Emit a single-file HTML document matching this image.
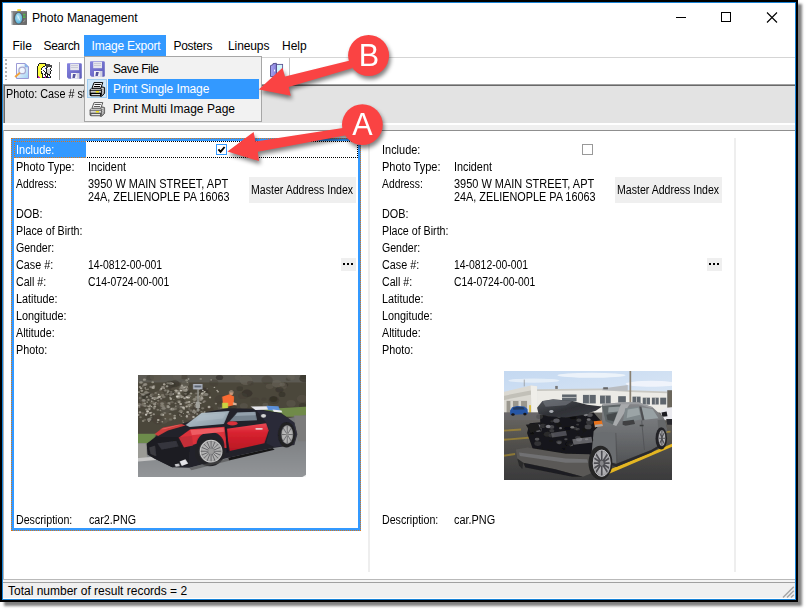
<!DOCTYPE html>
<html>
<head>
<meta charset="utf-8">
<title>Photo Management</title>
<style>
*{box-sizing:border-box;margin:0;padding:0}
html,body{width:806px;height:610px;background:#fff;overflow:hidden}
body{position:relative;font-family:"Liberation Sans",sans-serif;font-size:11px;color:#000}
.a{position:absolute}
svg{position:absolute;overflow:visible}
#win{left:0;top:0;width:798px;height:602px;background:#000;box-shadow:4px 4px 2.5px rgba(0,0,0,.5)}
#winb{left:2px;top:2px;width:794px;height:598px;background:#1883d7}
#client{left:3px;top:3px;width:792px;height:596px;background:#fff}
.t{position:absolute;white-space:nowrap;line-height:13px;height:13px;font-size:12px;transform-origin:0 0}
.ui{font-size:12px}
.mi{position:absolute;top:36px;height:21px;line-height:21px;font-size:12px;white-space:nowrap}
.di{position:absolute;left:113px;height:20px;line-height:20px;font-size:12px;white-space:nowrap}
.btn{position:absolute;background:#efefef;text-align:center;white-space:nowrap;font-size:11px}
.dot{position:absolute;width:2px;height:2px;background:#000}
</style>
</head>
<body>
<div id="win" class="a"></div><div id="winb" class="a"></div><div id="client" class="a"></div>
<svg style="left:10px;top:8px" width="18" height="18" viewBox="0 0 18 18">
<defs><linearGradient id="cb" x1="0" y1="0" x2="1" y2="0"><stop offset="0" stop-color="#dfe6ea"/><stop offset="0.16" stop-color="#7e7e7e"/><stop offset="1" stop-color="#6a6a6a"/></linearGradient>
<radialGradient id="cl" cx="0.45" cy="0.4" r="0.7"><stop offset="0" stop-color="#c4eaf8"/><stop offset="1" stop-color="#3fa6d4"/></radialGradient></defs>
<rect x="7.3" y="1.2" width="3.6" height="2.2" fill="#f2d91a"/>
<rect x="1" y="3" width="16" height="14" rx="0.8" fill="url(#cb)"/>
<path d="M1 3.8H17" stroke="#8d8d8d" stroke-width="0.8"/>
<ellipse cx="8.6" cy="10.2" rx="4.9" ry="6.2" fill="#5a6064"/>
<ellipse cx="8.6" cy="10.2" rx="3.6" ry="5.4" fill="url(#cl)"/>
<path d="M7.4 7.4L10 12.6" stroke="#e6f7fd" stroke-width="0.9" opacity="0.8"/>
<rect x="13" y="5.8" width="2.4" height="1.6" fill="#55b84a"/><rect x="13" y="8.4" width="2.4" height="1.6" fill="#55b84a"/>
<path d="M13 13.6Q15 13.6 15 11.6" stroke="#9a9a9a" stroke-width="0.9" fill="none"/>
</svg>
<div class="t ui" style="left:32px;top:11px;line-height:15px;height:15px;font-size:12.2px;letter-spacing:-0.05px">Photo Management</div>
<svg style="left:676px;top:11px" width="110" height="14" viewBox="0 0 110 14">
<path d="M0 6.5H10" stroke="#000" stroke-width="1" fill="none"/>
<rect x="45.5" y="1.5" width="9" height="9" stroke="#000" stroke-width="1" fill="none"/>
<path d="M91 1.5L101 11.5M101 1.5L91 11.5" stroke="#000" stroke-width="1.1" fill="none"/>
</svg>
<div class="a" style="left:84px;top:35px;width:82px;height:21px;background:#3399ff"></div>
<div class="mi" style="left:12.5px;letter-spacing:0px;color:#000">File</div>
<div class="mi" style="left:43.5px;letter-spacing:-0.3px;color:#000">Search</div>
<div class="mi" style="left:91.5px;letter-spacing:-0.2px;color:#fff">Image Export</div>
<div class="mi" style="left:173.5px;letter-spacing:-0.3px;color:#000">Posters</div>
<div class="mi" style="left:228px;letter-spacing:-0.1px;color:#000">Lineups</div>
<div class="mi" style="left:282px;letter-spacing:0px;color:#000">Help</div>
<div class="a" style="left:3px;top:57px;width:792px;height:1px;background:#d5d5d5"></div>
<div class="a" style="left:5px;top:59px;width:2px;height:21px;background-image:repeating-linear-gradient(#b4b4b4 0 2px,transparent 2px 4px)"></div>
<div class="a" style="left:59px;top:62px;width:1px;height:18px;background:#a0a0a0"></div>
<div class="a" style="left:289px;top:58px;width:1px;height:26px;background:#c4c4c4"></div>
<svg style="left:14px;top:63px" width="16" height="16" viewBox="0 0 16 16">
<defs><linearGradient id="dg1" x1="0" y1="0" x2="1" y2="1"><stop offset="0.15" stop-color="#fdfeff"/><stop offset="1" stop-color="#9fd0f3"/></linearGradient></defs>
<path d="M2.5 0.5H11L14.5 4V15.5H2.5Z" fill="url(#dg1)" stroke="#9b9ad6" stroke-width="1"/>
<path d="M11 0.5V4H14.5Z" fill="#79c2f6" stroke="#9b9ad6" stroke-width="0.6"/>
<circle cx="8.2" cy="7.4" r="3.3" fill="#f4f8ff" fill-opacity="0.85" stroke="#a9a9cf" stroke-width="1.3"/>
<path d="M5.4 10.2L1.6 13.5" stroke="#f3a33d" stroke-width="1.9" stroke-linecap="round"/>
</svg>
<svg style="left:37px;top:63px" width="16" height="16" viewBox="0 0 16 16"><defs><filter id="pb"><feGaussianBlur stdDeviation="0.3"/></filter></defs><g filter="url(#pb)"><rect x="2" y="0" width="7" height="1" fill="#1c1c1c"/><rect x="1" y="1" width="1" height="1" fill="#1c1c1c"/><rect x="2" y="1" width="6" height="1" fill="#ffff3e"/><rect x="8" y="1" width="1" height="1" fill="#1c1c1c"/><rect x="9" y="1" width="4" height="1" fill="#474747"/><rect x="1" y="2" width="1" height="1" fill="#1c1c1c"/><rect x="2" y="2" width="6" height="1" fill="#ffff3e"/><rect x="8" y="2" width="1" height="1" fill="#1c1c1c"/><rect x="9" y="2" width="6" height="1" fill="#474747"/><rect x="0" y="3" width="1" height="1" fill="#1c1c1c"/><rect x="1" y="3" width="5" height="1" fill="#ffff3e"/><rect x="6" y="3" width="2" height="1" fill="#1c1c1c"/><rect x="8" y="3" width="1" height="1" fill="#fbfbfb"/><rect x="9" y="3" width="6" height="1" fill="#474747"/><rect x="0" y="4" width="1" height="1" fill="#1c1c1c"/><rect x="1" y="4" width="4" height="1" fill="#ffff3e"/><rect x="5" y="4" width="1" height="1" fill="#1c1c1c"/><rect x="6" y="4" width="3" height="1" fill="#fbfbfb"/><rect x="9" y="4" width="2" height="1" fill="#474747"/><rect x="11" y="4" width="3" height="1" fill="#fbfbfb"/><rect x="14" y="4" width="1" height="1" fill="#474747"/><rect x="0" y="5" width="1" height="1" fill="#1c1c1c"/><rect x="1" y="5" width="3" height="1" fill="#ffff3e"/><rect x="4" y="5" width="1" height="1" fill="#1c1c1c"/><rect x="5" y="5" width="3" height="1" fill="#fbfbfb"/><rect x="8" y="5" width="1" height="1" fill="#2233e6"/><rect x="9" y="5" width="1" height="1" fill="#1c1c1c"/><rect x="10" y="5" width="3" height="1" fill="#fbfbfb"/><rect x="13" y="5" width="1" height="1" fill="#1c1c1c"/><rect x="0" y="6" width="1" height="1" fill="#1c1c1c"/><rect x="1" y="6" width="3" height="1" fill="#ffff3e"/><rect x="4" y="6" width="1" height="1" fill="#1c1c1c"/><rect x="5" y="6" width="4" height="1" fill="#fbfbfb"/><rect x="9" y="6" width="1" height="1" fill="#1c1c1c"/><rect x="10" y="6" width="3" height="1" fill="#d4d4d4"/><rect x="13" y="6" width="1" height="1" fill="#1c1c1c"/><rect x="0" y="7" width="1" height="1" fill="#1c1c1c"/><rect x="1" y="7" width="3" height="1" fill="#ffff3e"/><rect x="4" y="7" width="2" height="1" fill="#fbfbfb"/><rect x="6" y="7" width="1" height="1" fill="#1c1c1c"/><rect x="7" y="7" width="2" height="1" fill="#fbfbfb"/><rect x="9" y="7" width="1" height="1" fill="#1c1c1c"/><rect x="10" y="7" width="3" height="1" fill="#d4d4d4"/><rect x="13" y="7" width="1" height="1" fill="#fbfbfb"/><rect x="14" y="7" width="1" height="1" fill="#1c1c1c"/><rect x="0" y="8" width="1" height="1" fill="#1c1c1c"/><rect x="1" y="8" width="3" height="1" fill="#ffff3e"/><rect x="4" y="8" width="1" height="1" fill="#1c1c1c"/><rect x="5" y="8" width="2" height="1" fill="#fbfbfb"/><rect x="7" y="8" width="1" height="1" fill="#1c1c1c"/><rect x="8" y="8" width="1" height="1" fill="#fbfbfb"/><rect x="9" y="8" width="1" height="1" fill="#1c1c1c"/><rect x="10" y="8" width="3" height="1" fill="#d4d4d4"/><rect x="13" y="8" width="1" height="1" fill="#1c1c1c"/><rect x="0" y="9" width="1" height="1" fill="#1c1c1c"/><rect x="1" y="9" width="3" height="1" fill="#ffff3e"/><rect x="4" y="9" width="1" height="1" fill="#1c1c1c"/><rect x="5" y="9" width="3" height="1" fill="#fbfbfb"/><rect x="8" y="9" width="2" height="1" fill="#1c1c1c"/><rect x="10" y="9" width="3" height="1" fill="#d4d4d4"/><rect x="13" y="9" width="1" height="1" fill="#1c1c1c"/><rect x="0" y="10" width="1" height="1" fill="#1c1c1c"/><rect x="1" y="10" width="3" height="1" fill="#ffff3e"/><rect x="4" y="10" width="2" height="1" fill="#1c1c1c"/><rect x="6" y="10" width="2" height="1" fill="#fbfbfb"/><rect x="8" y="10" width="1" height="1" fill="#1c1c1c"/><rect x="9" y="10" width="1" height="1" fill="#474747"/><rect x="10" y="10" width="1" height="1" fill="#1c1c1c"/><rect x="11" y="10" width="2" height="1" fill="#d4d4d4"/><rect x="13" y="10" width="1" height="1" fill="#1c1c1c"/><rect x="0" y="11" width="1" height="1" fill="#1c1c1c"/><rect x="1" y="11" width="4" height="1" fill="#ffff3e"/><rect x="5" y="11" width="1" height="1" fill="#1c1c1c"/><rect x="6" y="11" width="1" height="1" fill="#fbfbfb"/><rect x="7" y="11" width="1" height="1" fill="#1c1c1c"/><rect x="8" y="11" width="1" height="1" fill="#474747"/><rect x="9" y="11" width="1" height="1" fill="#fbfbfb"/><rect x="10" y="11" width="3" height="1" fill="#1c1c1c"/><rect x="0" y="12" width="1" height="1" fill="#1c1c1c"/><rect x="1" y="12" width="4" height="1" fill="#ffff3e"/><rect x="5" y="12" width="1" height="1" fill="#1c1c1c"/><rect x="6" y="12" width="2" height="1" fill="#fbfbfb"/><rect x="8" y="12" width="1" height="1" fill="#1c1c1c"/><rect x="9" y="12" width="1" height="1" fill="#fbfbfb"/><rect x="10" y="12" width="1" height="1" fill="#1c1c1c"/><rect x="11" y="12" width="1" height="1" fill="#fbfbfb"/><rect x="12" y="12" width="1" height="1" fill="#1c1c1c"/><rect x="0" y="13" width="1" height="1" fill="#1c1c1c"/><rect x="1" y="13" width="1" height="1" fill="#c21fc2"/><rect x="2" y="13" width="3" height="1" fill="#ffff3e"/><rect x="5" y="13" width="1" height="1" fill="#1c1c1c"/><rect x="6" y="13" width="2" height="1" fill="#fbfbfb"/><rect x="8" y="13" width="1" height="1" fill="#c21fc2"/><rect x="9" y="13" width="2" height="1" fill="#1c1c1c"/><rect x="11" y="13" width="2" height="1" fill="#fbfbfb"/><rect x="13" y="13" width="1" height="1" fill="#1c1c1c"/><rect x="0" y="14" width="1" height="1" fill="#1c1c1c"/><rect x="1" y="14" width="2" height="1" fill="#c21fc2"/><rect x="3" y="14" width="2" height="1" fill="#ffff3e"/><rect x="5" y="14" width="3" height="1" fill="#1c1c1c"/><rect x="8" y="14" width="1" height="1" fill="#c21fc2"/><rect x="9" y="14" width="3" height="1" fill="#1c1c1c"/><rect x="12" y="14" width="1" height="1" fill="#2233e6"/><rect x="13" y="14" width="1" height="1" fill="#1c1c1c"/></g></svg>
<svg style="left:66px;top:63px" width="16" height="16" viewBox="0 0 16 16">
<defs><linearGradient id="fga" x1="0" y1="0" x2="1" y2="1"><stop offset="0" stop-color="#8583e0"/><stop offset="1" stop-color="#5d5cb8"/></linearGradient></defs>
<path d="M1.8 0.3H14.6Q15.8 0.3 15.8 1.5V14.6Q15.8 15.8 14.6 15.8H2.6L1 14.2V1.1Q1 0.3 1.8 0.3Z" fill="url(#fga)"/>
<rect x="4.2" y="0.8" width="8.8" height="6.4" fill="#e6e6ee"/>
<path d="M5 2.5H12M5 4.5H12" stroke="#c9c9d6" stroke-width="1"/>
<rect x="5" y="10" width="8.2" height="5.8" fill="#f3f3f8"/>
<path d="M7 11H9.8L8.8 15H6.4Z" fill="#55549e"/>
<path d="M10.5 10L13.2 10V15.8H11.2Z" fill="#d2d2e2"/>
</svg>
<svg style="left:269px;top:62px" width="16" height="16" viewBox="0 0 16 16">
<defs><linearGradient id="dr1" x1="0" y1="0" x2="1" y2="0"><stop offset="0" stop-color="#a9a4f2"/><stop offset="1" stop-color="#8782da"/></linearGradient></defs>
<rect x="7.4" y="2.4" width="6.2" height="12.4" fill="#d2f5fb" stroke="#5b5693" stroke-width="0.9"/>
<path d="M1.5 3.6L4 2.6V1.6L7.4 1.3V14.6H1.5Z" fill="url(#dr1)" stroke="#4e4987" stroke-width="0.9"/>
<rect x="5" y="7.6" width="1.1" height="1.8" fill="#f4f4ff"/>
</svg>
<div class="a" style="left:3px;top:84px;width:792px;height:39px;background:#e3e3e3;border-top:1px solid #a0a0a0;border-left:1px solid #a0a0a0"></div>
<div class="a" style="left:4px;top:85px;width:791px;height:38px;border-top:1px solid #696969;border-left:1px solid #696969"></div>
<div class="t" style="left:6px;top:88px;transform:scaleX(0.9)">Photo: Case # st</div>
<div class="a" style="left:3px;top:125px;width:792px;height:5px;background:#f0f0f0"></div>
<div class="a" style="left:3px;top:130px;width:792px;height:1px;background:#8f8f8f"></div>
<div class="a" style="left:3px;top:130px;width:1px;height:450px;background:#b4b4b4"></div>
<div class="a" style="left:84px;top:56px;width:178px;height:66px;background:#f2f2f2;border:1px solid #a6a6a6"></div>
<div class="a" style="left:108px;top:79px;width:151px;height:20px;background:#3399ff"></div>
<div class="a" style="left:87px;top:79px;width:20px;height:19px;background:#cfe6f8;border:1px solid #9fcdf0"></div>
<div class="di" style="top:59px;letter-spacing:-0.5px">Save File</div>
<div class="di" style="top:79px;color:#fff;letter-spacing:-0.1px">Print Single Image</div>
<div class="di" style="top:99px;letter-spacing:0.03px">Print Multi Image Page</div>
<svg style="left:89px;top:61px" width="16" height="16" viewBox="0 0 16 16">
<defs><linearGradient id="fgb" x1="0" y1="0" x2="1" y2="1"><stop offset="0" stop-color="#8583e0"/><stop offset="1" stop-color="#5d5cb8"/></linearGradient></defs>
<path d="M1.8 0.3H14.6Q15.8 0.3 15.8 1.5V14.6Q15.8 15.8 14.6 15.8H2.6L1 14.2V1.1Q1 0.3 1.8 0.3Z" fill="url(#fgb)"/>
<rect x="4.2" y="0.8" width="8.8" height="6.4" fill="#e6e6ee"/>
<path d="M5 2.5H12M5 4.5H12" stroke="#c9c9d6" stroke-width="1"/>
<rect x="5" y="10" width="8.2" height="5.8" fill="#f3f3f8"/>
<path d="M7 11H9.8L8.8 15H6.4Z" fill="#55549e"/>
<path d="M10.5 10L13.2 10V15.8H11.2Z" fill="#d2d2e2"/>
</svg>
<svg style="left:89px;top:82px" width="16" height="15" viewBox="0 0 16 15">
<path d="M12 4.5L15.6 5.6V11.2L13 14.2H11Z" fill="#9a9a9a" stroke="#000" stroke-width="0.9"/>
<path d="M12.4 6.2L14.8 7M12.4 8.4L14.8 9.2M12.4 10.6L14.2 11.2" stroke="#e8e8e8" stroke-width="0.8"/>
<path d="M5 0.6H13.8L11.8 6.2H3Z" fill="#fff" stroke="#000" stroke-width="1"/>
<path d="M5.6 2.5H11.8M4.9 4.5H11.1" stroke="#000" stroke-width="1"/>
<rect x="0.6" y="6.6" width="12.2" height="7.6" rx="1.6" fill="#000"/>
<rect x="1.6" y="8.8" width="10.4" height="1.9" fill="#c8c8c8"/>
<rect x="6.8" y="9.1" width="3.2" height="1.4" fill="#f2e300"/>
<rect x="2.4" y="12.1" width="8.6" height="1.1" fill="#f2f2f2"/>
<path d="M1.6 7.6H11.8" stroke="#dcdcdc" stroke-width="0.9"/>
</svg>
<svg style="left:89px;top:102px" width="16" height="15" viewBox="0 0 16 15">
<path d="M12 4.5L15.6 5.6V11.2L13 14.2H11Z" fill="#9a9a9a" stroke="#5c5c5c" stroke-width="0.9"/>
<path d="M12.4 6.2L14.8 7M12.4 8.4L14.8 9.2M12.4 10.6L14.2 11.2" stroke="#e8e8e8" stroke-width="0.8"/>
<path d="M5 0.6H13.8L11.8 6.2H3Z" fill="#fff" stroke="#5c5c5c" stroke-width="1"/>
<path d="M5.6 2.5H11.8M4.9 4.5H11.1" stroke="#5c5c5c" stroke-width="1"/>
<rect x="0.6" y="6.6" width="12.2" height="7.6" rx="1.6" fill="#5c5c5c"/>
<rect x="1.6" y="8.8" width="10.4" height="1.9" fill="#d6d6d6"/>
<rect x="6.8" y="9.1" width="3.2" height="1.4" fill="#f2e300"/>
<rect x="2.4" y="12.1" width="8.6" height="1.1" fill="#f2f2f2"/>
<path d="M1.6 7.6H11.8" stroke="#dcdcdc" stroke-width="0.9"/>
</svg>
<div class="a" style="left:368px;top:138px;width:2px;height:434px;background:#eeeeee"></div>
<div class="a" style="left:734px;top:138px;width:2px;height:434px;background:#eeeeee"></div>
<div class="a" style="left:11px;top:138px;width:350px;height:393px;border:3px solid #3399ff"></div>
<div class="a" style="left:11px;top:138px;width:350px;height:393px;border:1px dotted #d8781c"></div>
<div class="a" style="left:14px;top:141px;width:72px;height:17px;background:#3399ff"></div>
<div class="a" style="left:14px;top:141px;width:344px;height:17px;border:1px dotted #000"></div>
<div class="a" style="left:14px;top:141px;width:72px;height:17px;border:1px dotted #d8781c;border-right:none"></div>
<div class="t" style="left:15.79px;top:144px;transform:scaleX(0.9125);color:#fff">Include:</div>
<div class="t" style="left:15.78px;top:161px;transform:scaleX(0.9166)">Photo Type:</div><div class="t" style="left:88.00px;top:161px;transform:scaleX(0.9024)">Incident</div>
<div class="t" style="left:16.30px;top:178px;transform:scaleX(0.8627)">Address:</div><div class="t" style="left:88.34px;top:178px;transform:scaleX(0.9139)">3950 W MAIN STREET, APT</div>
<div class="t" style="left:88.35px;top:191px;transform:scaleX(0.9042)">24A, ZELIENOPLE PA 16063</div>
<div class="t" style="left:15.80px;top:208px;transform:scaleX(0.9028)">DOB:</div>
<div class="t" style="left:15.81px;top:225px;transform:scaleX(0.8907)">Place of Birth:</div>
<div class="t" style="left:16.26px;top:242px;transform:scaleX(0.8814)">Gender:</div>
<div class="t" style="left:16.25px;top:259px;transform:scaleX(0.8981)">Case #:</div><div class="t" style="left:88.43px;top:259px;transform:scaleX(0.8669)">14-0812-00-001</div>
<div class="t" style="left:16.26px;top:276px;transform:scaleX(0.8862)">Call #:</div><div class="t" style="left:88.17px;top:276px;transform:scaleX(0.8645)">C14-0724-00-001</div>
<div class="t" style="left:15.80px;top:293px;transform:scaleX(0.9023)">Latitude:</div>
<div class="t" style="left:15.80px;top:310px;transform:scaleX(0.9019)">Longitude:</div>
<div class="t" style="left:15.80px;top:327px;transform:scaleX(0.8923)">Altitude:</div>
<div class="t" style="left:15.80px;top:344px;transform:scaleX(0.9008)">Photo:</div>
<div class="t" style="left:15.81px;top:514px;transform:scaleX(0.8882)">Description:</div><div class="t" style="left:88.55px;top:514px;transform:scaleX(0.8917)">car2.PNG</div>
<div class="t" style="left:381.79px;top:144px;transform:scaleX(0.9125)">Include:</div>
<div class="t" style="left:381.78px;top:161px;transform:scaleX(0.9166)">Photo Type:</div><div class="t" style="left:454.00px;top:161px;transform:scaleX(0.9024)">Incident</div>
<div class="t" style="left:382.30px;top:178px;transform:scaleX(0.8627)">Address:</div><div class="t" style="left:454.34px;top:178px;transform:scaleX(0.9139)">3950 W MAIN STREET, APT</div>
<div class="t" style="left:454.35px;top:191px;transform:scaleX(0.9042)">24A, ZELIENOPLE PA 16063</div>
<div class="t" style="left:381.80px;top:208px;transform:scaleX(0.9028)">DOB:</div>
<div class="t" style="left:381.81px;top:225px;transform:scaleX(0.8907)">Place of Birth:</div>
<div class="t" style="left:382.26px;top:242px;transform:scaleX(0.8814)">Gender:</div>
<div class="t" style="left:382.25px;top:259px;transform:scaleX(0.8981)">Case #:</div><div class="t" style="left:454.43px;top:259px;transform:scaleX(0.8669)">14-0812-00-001</div>
<div class="t" style="left:382.26px;top:276px;transform:scaleX(0.8862)">Call #:</div><div class="t" style="left:454.17px;top:276px;transform:scaleX(0.8645)">C14-0724-00-001</div>
<div class="t" style="left:381.80px;top:293px;transform:scaleX(0.9023)">Latitude:</div>
<div class="t" style="left:381.80px;top:310px;transform:scaleX(0.9019)">Longitude:</div>
<div class="t" style="left:381.80px;top:327px;transform:scaleX(0.8923)">Altitude:</div>
<div class="t" style="left:381.80px;top:344px;transform:scaleX(0.9008)">Photo:</div>
<div class="t" style="left:381.81px;top:514px;transform:scaleX(0.8882)">Description:</div><div class="t" style="left:454.05px;top:514px;transform:scaleX(0.9091)">car.PNG</div>
<div class="a" style="left:249px;top:177px;width:107px;height:26px;background:#efefef"></div><div class="t" style="left:251.12px;top:184px;transform:scaleX(0.8802)">Master Address Index</div>
<div class="a" style="left:615px;top:177px;width:107px;height:26px;background:#efefef"></div><div class="t" style="left:617.12px;top:184px;transform:scaleX(0.8802)">Master Address Index</div>
<div class="a" style="left:341px;top:258px;width:15px;height:13px;background:#efefef"></div><div class="dot" style="left:343px;top:263px"></div><div class="dot" style="left:347px;top:263px"></div><div class="dot" style="left:351px;top:263px"></div>
<div class="a" style="left:707px;top:258px;width:15px;height:13px;background:#efefef"></div><div class="dot" style="left:709px;top:263px"></div><div class="dot" style="left:713px;top:263px"></div><div class="dot" style="left:717px;top:263px"></div>
<div class="a" style="left:216px;top:144px;width:11px;height:11px;background:#fff;border:1px solid #3399ff"></div>
<svg style="left:216px;top:144px" width="11" height="11" viewBox="0 0 11 11"><path d="M2.4 5.3L4.6 7.7L8.6 3" stroke="#000" stroke-width="1.9" fill="none"/></svg>
<div class="a" style="left:582px;top:144px;width:11px;height:11px;background:#fff;border:1px solid #999"></div>
<svg style="left:138px;top:375px" width="168" height="102" viewBox="0 0 168 102">
<defs>
<clipPath id="p1c"><rect x="0" y="0" width="168" height="102"/></clipPath>
<filter id="p1b" x="-5%" y="-5%" width="110%" height="110%"><feGaussianBlur stdDeviation="0.55"/></filter>
<linearGradient id="p1road" x1="0" y1="0" x2="0" y2="1"><stop offset="0" stop-color="#717376"/><stop offset="1" stop-color="#94979a"/></linearGradient>
<linearGradient id="p1ws" x1="0" y1="0" x2="1" y2="1"><stop offset="0" stop-color="#bccad2"/><stop offset="1" stop-color="#8696a2"/></linearGradient>
<linearGradient id="p1door" x1="0" y1="0" x2="0" y2="1"><stop offset="0" stop-color="#ea4a55"/><stop offset="0.35" stop-color="#d8222f"/><stop offset="1" stop-color="#b81824"/></linearGradient>
<radialGradient id="p1rim" cx="0.5" cy="0.5" r="0.5"><stop offset="0" stop-color="#8c8c8c"/><stop offset="0.25" stop-color="#c4c4c4"/><stop offset="0.85" stop-color="#aeaeae"/><stop offset="1" stop-color="#7a7a7a"/></radialGradient>
</defs>
<g clip-path="url(#p1c)">
<g filter="url(#p1b)">
<g transform="scale(0.2134) translate(-10 -10)">
<rect x="0" y="0" width="810" height="500" fill="#4b463b"/>
<rect x="0" y="0" width="810" height="45" fill="#5c5a52"/>
<g><ellipse cx="191" cy="83" rx="29" ry="21" fill="#5e594c" opacity="0.45"/><ellipse cx="516" cy="35" rx="30" ry="22" fill="#68645a" opacity="0.67"/><ellipse cx="68" cy="219" rx="11" ry="8" fill="#2f2c25" opacity="0.45"/><ellipse cx="208" cy="196" rx="13" ry="9" fill="#443f35" opacity="0.70"/><ellipse cx="160" cy="55" rx="26" ry="18" fill="#38342b" opacity="0.42"/><ellipse cx="37" cy="119" rx="26" ry="19" fill="#68645a" opacity="0.35"/><ellipse cx="714" cy="29" rx="12" ry="9" fill="#443f35" opacity="0.46"/><ellipse cx="392" cy="22" rx="17" ry="12" fill="#2f2c25" opacity="0.61"/><ellipse cx="430" cy="149" rx="26" ry="19" fill="#38342b" opacity="0.56"/><ellipse cx="196" cy="114" rx="26" ry="19" fill="#5e594c" opacity="0.44"/><ellipse cx="487" cy="74" rx="15" ry="11" fill="#38342b" opacity="0.55"/><ellipse cx="700" cy="56" rx="14" ry="10" fill="#38342b" opacity="0.56"/><ellipse cx="647" cy="128" rx="25" ry="18" fill="#38342b" opacity="0.38"/><ellipse cx="727" cy="143" rx="22" ry="16" fill="#5e594c" opacity="0.57"/><ellipse cx="53" cy="111" rx="25" ry="18" fill="#2f2c25" opacity="0.61"/><ellipse cx="404" cy="161" rx="21" ry="15" fill="#68645a" opacity="0.44"/><ellipse cx="136" cy="170" rx="27" ry="20" fill="#68645a" opacity="0.37"/><ellipse cx="334" cy="97" rx="15" ry="11" fill="#38342b" opacity="0.39"/><ellipse cx="607" cy="150" rx="14" ry="10" fill="#68645a" opacity="0.53"/><ellipse cx="789" cy="16" rx="19" ry="14" fill="#2f2c25" opacity="0.40"/><ellipse cx="320" cy="82" rx="20" ry="14" fill="#38342b" opacity="0.69"/><ellipse cx="781" cy="153" rx="17" ry="12" fill="#38342b" opacity="0.54"/><ellipse cx="201" cy="119" rx="29" ry="21" fill="#443f35" opacity="0.46"/><ellipse cx="182" cy="51" rx="23" ry="16" fill="#38342b" opacity="0.61"/><ellipse cx="150" cy="208" rx="30" ry="21" fill="#5e594c" opacity="0.48"/><ellipse cx="627" cy="63" rx="18" ry="13" fill="#5e594c" opacity="0.63"/><ellipse cx="645" cy="123" rx="19" ry="14" fill="#2f2c25" opacity="0.51"/><ellipse cx="254" cy="116" rx="31" ry="22" fill="#5e594c" opacity="0.65"/><ellipse cx="172" cy="101" rx="13" ry="9" fill="#443f35" opacity="0.48"/><ellipse cx="227" cy="19" rx="15" ry="11" fill="#443f35" opacity="0.53"/><ellipse cx="458" cy="161" rx="15" ry="11" fill="#38342b" opacity="0.48"/><ellipse cx="131" cy="226" rx="18" ry="13" fill="#5e594c" opacity="0.60"/><ellipse cx="727" cy="20" rx="18" ry="13" fill="#68645a" opacity="0.51"/><ellipse cx="685" cy="101" rx="16" ry="12" fill="#2f2c25" opacity="0.58"/><ellipse cx="249" cy="152" rx="21" ry="15" fill="#5e594c" opacity="0.40"/><ellipse cx="480" cy="22" rx="17" ry="12" fill="#68645a" opacity="0.52"/><ellipse cx="558" cy="131" rx="22" ry="16" fill="#443f35" opacity="0.60"/><ellipse cx="536" cy="48" rx="15" ry="11" fill="#443f35" opacity="0.54"/><ellipse cx="365" cy="46" rx="21" ry="15" fill="#443f35" opacity="0.43"/><ellipse cx="241" cy="93" rx="15" ry="11" fill="#38342b" opacity="0.65"/><ellipse cx="600" cy="124" rx="11" ry="8" fill="#443f35" opacity="0.58"/><ellipse cx="63" cy="207" rx="22" ry="16" fill="#443f35" opacity="0.58"/><ellipse cx="195" cy="157" rx="13" ry="9" fill="#68645a" opacity="0.39"/><ellipse cx="399" cy="125" rx="29" ry="21" fill="#443f35" opacity="0.52"/><ellipse cx="231" cy="51" rx="19" ry="14" fill="#68645a" opacity="0.62"/><ellipse cx="287" cy="175" rx="21" ry="15" fill="#443f35" opacity="0.67"/><ellipse cx="645" cy="123" rx="16" ry="12" fill="#2f2c25" opacity="0.46"/><ellipse cx="105" cy="220" rx="29" ry="21" fill="#443f35" opacity="0.37"/><ellipse cx="401" cy="147" rx="20" ry="15" fill="#443f35" opacity="0.66"/><ellipse cx="67" cy="23" rx="18" ry="13" fill="#443f35" opacity="0.55"/><ellipse cx="217" cy="165" rx="15" ry="11" fill="#68645a" opacity="0.48"/><ellipse cx="280" cy="217" rx="12" ry="8" fill="#5e594c" opacity="0.62"/><ellipse cx="506" cy="155" rx="19" ry="14" fill="#68645a" opacity="0.37"/><ellipse cx="64" cy="119" rx="20" ry="14" fill="#68645a" opacity="0.36"/><ellipse cx="117" cy="129" rx="17" ry="12" fill="#443f35" opacity="0.52"/><ellipse cx="27" cy="151" rx="16" ry="12" fill="#443f35" opacity="0.59"/><ellipse cx="195" cy="15" rx="22" ry="16" fill="#68645a" opacity="0.35"/><ellipse cx="615" cy="33" rx="27" ry="20" fill="#443f35" opacity="0.44"/><ellipse cx="92" cy="19" rx="27" ry="19" fill="#5e594c" opacity="0.59"/><ellipse cx="661" cy="51" rx="23" ry="17" fill="#68645a" opacity="0.63"/><ellipse cx="242" cy="108" rx="18" ry="13" fill="#2f2c25" opacity="0.52"/><ellipse cx="521" cy="96" rx="25" ry="18" fill="#2f2c25" opacity="0.61"/><ellipse cx="255" cy="206" rx="21" ry="15" fill="#68645a" opacity="0.36"/><ellipse cx="501" cy="108" rx="21" ry="15" fill="#443f35" opacity="0.44"/><ellipse cx="320" cy="176" rx="16" ry="12" fill="#443f35" opacity="0.41"/><ellipse cx="686" cy="61" rx="22" ry="16" fill="#5e594c" opacity="0.55"/><ellipse cx="342" cy="174" rx="23" ry="17" fill="#443f35" opacity="0.63"/><ellipse cx="109" cy="100" rx="24" ry="17" fill="#5e594c" opacity="0.58"/><ellipse cx="779" cy="121" rx="25" ry="18" fill="#5e594c" opacity="0.44"/><ellipse cx="224" cy="72" rx="24" ry="17" fill="#68645a" opacity="0.68"/><ellipse cx="791" cy="26" rx="25" ry="18" fill="#38342b" opacity="0.65"/><ellipse cx="163" cy="95" rx="22" ry="16" fill="#38342b" opacity="0.49"/><ellipse cx="686" cy="54" rx="13" ry="9" fill="#68645a" opacity="0.63"/><ellipse cx="673" cy="79" rx="19" ry="13" fill="#2f2c25" opacity="0.49"/><ellipse cx="122" cy="145" rx="24" ry="17" fill="#5e594c" opacity="0.54"/></g>
<g><ellipse cx="186" cy="143" rx="4.9" ry="3.7" fill="#8f8b7e" opacity="0.88"/><ellipse cx="84" cy="194" rx="5.5" ry="4.2" fill="#cfcbc0" opacity="0.54"/><ellipse cx="33" cy="65" rx="3.0" ry="2.3" fill="#dedad0" opacity="0.65"/><ellipse cx="240" cy="66" rx="4.1" ry="3.2" fill="#b9b5a8" opacity="0.80"/><ellipse cx="188" cy="83" rx="7.1" ry="5.5" fill="#b9b5a8" opacity="0.82"/><ellipse cx="133" cy="73" rx="3.2" ry="2.4" fill="#b9b5a8" opacity="0.68"/><ellipse cx="314" cy="82" rx="4.3" ry="3.3" fill="#dedad0" opacity="0.84"/><ellipse cx="56" cy="77" rx="3.1" ry="2.4" fill="#dedad0" opacity="0.58"/><ellipse cx="228" cy="119" rx="6.0" ry="4.6" fill="#cfcbc0" opacity="0.69"/><ellipse cx="160" cy="108" rx="2.9" ry="2.2" fill="#8f8b7e" opacity="0.64"/><ellipse cx="343" cy="160" rx="7.1" ry="5.5" fill="#cfcbc0" opacity="0.70"/><ellipse cx="14" cy="153" rx="4.5" ry="3.5" fill="#b9b5a8" opacity="0.54"/><ellipse cx="237" cy="76" rx="4.5" ry="3.4" fill="#dedad0" opacity="0.56"/><ellipse cx="239" cy="200" rx="4.5" ry="3.5" fill="#c4c0b4" opacity="0.57"/><ellipse cx="364" cy="197" rx="3.7" ry="2.8" fill="#c4c0b4" opacity="0.78"/><ellipse cx="226" cy="169" rx="4.9" ry="3.8" fill="#b9b5a8" opacity="0.69"/><ellipse cx="103" cy="173" rx="6.4" ry="4.9" fill="#8f8b7e" opacity="0.72"/><ellipse cx="59" cy="126" rx="5.5" ry="4.2" fill="#b9b5a8" opacity="0.63"/><ellipse cx="368" cy="68" rx="4.0" ry="3.1" fill="#dedad0" opacity="0.61"/><ellipse cx="28" cy="84" rx="7.0" ry="5.4" fill="#b9b5a8" opacity="0.66"/><ellipse cx="280" cy="148" rx="3.0" ry="2.3" fill="#b9b5a8" opacity="0.71"/><ellipse cx="149" cy="90" rx="5.4" ry="4.2" fill="#b9b5a8" opacity="0.72"/><ellipse cx="295" cy="92" rx="3.2" ry="2.4" fill="#8f8b7e" opacity="0.67"/><ellipse cx="61" cy="227" rx="3.2" ry="2.5" fill="#dedad0" opacity="0.91"/><ellipse cx="159" cy="147" rx="3.2" ry="2.5" fill="#c4c0b4" opacity="0.55"/><ellipse cx="110" cy="112" rx="6.9" ry="5.3" fill="#c4c0b4" opacity="0.76"/><ellipse cx="182" cy="201" rx="6.1" ry="4.7" fill="#b9b5a8" opacity="0.64"/><ellipse cx="54" cy="189" rx="4.9" ry="3.8" fill="#b9b5a8" opacity="0.67"/><ellipse cx="66" cy="153" rx="6.1" ry="4.7" fill="#a39f92" opacity="0.80"/><ellipse cx="182" cy="212" rx="5.7" ry="4.4" fill="#cfcbc0" opacity="0.79"/><ellipse cx="323" cy="183" rx="3.8" ry="2.9" fill="#cfcbc0" opacity="0.76"/><ellipse cx="133" cy="54" rx="6.5" ry="5.0" fill="#b9b5a8" opacity="0.82"/><ellipse cx="381" cy="83" rx="4.8" ry="3.7" fill="#a39f92" opacity="0.92"/><ellipse cx="272" cy="175" rx="5.5" ry="4.3" fill="#a39f92" opacity="0.53"/><ellipse cx="22" cy="208" rx="5.9" ry="4.5" fill="#8f8b7e" opacity="0.66"/><ellipse cx="263" cy="143" rx="4.6" ry="3.5" fill="#cfcbc0" opacity="0.51"/><ellipse cx="334" cy="75" rx="3.1" ry="2.4" fill="#c4c0b4" opacity="0.55"/><ellipse cx="53" cy="137" rx="4.4" ry="3.4" fill="#b9b5a8" opacity="0.81"/><ellipse cx="88" cy="125" rx="2.9" ry="2.2" fill="#dedad0" opacity="0.74"/><ellipse cx="24" cy="73" rx="5.2" ry="4.0" fill="#8f8b7e" opacity="0.73"/><ellipse cx="283" cy="72" rx="6.7" ry="5.1" fill="#dedad0" opacity="0.56"/><ellipse cx="187" cy="156" rx="4.5" ry="3.4" fill="#8f8b7e" opacity="0.79"/><ellipse cx="206" cy="197" rx="4.3" ry="3.3" fill="#cfcbc0" opacity="0.54"/><ellipse cx="58" cy="76" rx="3.2" ry="2.5" fill="#a39f92" opacity="0.74"/><ellipse cx="318" cy="92" rx="6.5" ry="5.0" fill="#a39f92" opacity="0.73"/><ellipse cx="24" cy="97" rx="4.0" ry="3.1" fill="#b9b5a8" opacity="0.60"/><ellipse cx="348" cy="115" rx="5.1" ry="4.0" fill="#c4c0b4" opacity="0.85"/><ellipse cx="44" cy="71" rx="4.1" ry="3.2" fill="#c4c0b4" opacity="0.75"/><ellipse cx="74" cy="133" rx="4.0" ry="3.0" fill="#c4c0b4" opacity="0.67"/><ellipse cx="233" cy="67" rx="5.0" ry="3.9" fill="#8f8b7e" opacity="0.67"/><ellipse cx="222" cy="233" rx="3.3" ry="2.5" fill="#cfcbc0" opacity="0.53"/><ellipse cx="220" cy="112" rx="6.8" ry="5.2" fill="#a39f92" opacity="0.61"/><ellipse cx="202" cy="96" rx="6.9" ry="5.3" fill="#dedad0" opacity="0.74"/><ellipse cx="52" cy="113" rx="4.0" ry="3.1" fill="#c4c0b4" opacity="0.85"/><ellipse cx="19" cy="66" rx="5.8" ry="4.5" fill="#a39f92" opacity="0.83"/><ellipse cx="105" cy="130" rx="5.4" ry="4.1" fill="#8f8b7e" opacity="0.78"/><ellipse cx="290" cy="172" rx="3.0" ry="2.3" fill="#c4c0b4" opacity="0.69"/><ellipse cx="216" cy="59" rx="5.6" ry="4.3" fill="#c4c0b4" opacity="0.60"/><ellipse cx="94" cy="139" rx="3.4" ry="2.7" fill="#c4c0b4" opacity="0.78"/><ellipse cx="146" cy="63" rx="6.7" ry="5.1" fill="#cfcbc0" opacity="0.60"/><ellipse cx="399" cy="211" rx="3.9" ry="3.0" fill="#c4c0b4" opacity="0.54"/><ellipse cx="161" cy="116" rx="5.2" ry="4.0" fill="#c4c0b4" opacity="0.56"/><ellipse cx="167" cy="169" rx="3.7" ry="2.9" fill="#c4c0b4" opacity="0.66"/><ellipse cx="258" cy="97" rx="6.4" ry="4.9" fill="#b9b5a8" opacity="0.72"/><ellipse cx="19" cy="185" rx="6.7" ry="5.2" fill="#dedad0" opacity="0.57"/><ellipse cx="82" cy="68" rx="7.1" ry="5.5" fill="#c4c0b4" opacity="0.54"/><ellipse cx="34" cy="225" rx="6.1" ry="4.7" fill="#a39f92" opacity="0.68"/><ellipse cx="176" cy="99" rx="4.5" ry="3.4" fill="#c4c0b4" opacity="0.82"/><ellipse cx="298" cy="110" rx="3.6" ry="2.7" fill="#8f8b7e" opacity="0.86"/><ellipse cx="232" cy="65" rx="4.3" ry="3.3" fill="#a39f92" opacity="0.63"/><ellipse cx="55" cy="181" rx="6.9" ry="5.3" fill="#cfcbc0" opacity="0.90"/><ellipse cx="308" cy="110" rx="3.2" ry="2.4" fill="#a39f92" opacity="0.64"/><ellipse cx="385" cy="88" rx="4.6" ry="3.5" fill="#cfcbc0" opacity="0.74"/><ellipse cx="283" cy="185" rx="3.0" ry="2.3" fill="#8f8b7e" opacity="0.55"/><ellipse cx="102" cy="118" rx="6.1" ry="4.7" fill="#c4c0b4" opacity="0.67"/><ellipse cx="48" cy="78" rx="5.2" ry="4.0" fill="#8f8b7e" opacity="0.69"/><ellipse cx="213" cy="203" rx="4.8" ry="3.7" fill="#c4c0b4" opacity="0.53"/><ellipse cx="243" cy="184" rx="6.9" ry="5.3" fill="#cfcbc0" opacity="0.67"/><ellipse cx="243" cy="115" rx="4.1" ry="3.1" fill="#dedad0" opacity="0.77"/><ellipse cx="153" cy="85" rx="5.3" ry="4.1" fill="#a39f92" opacity="0.80"/><ellipse cx="238" cy="158" rx="5.8" ry="4.5" fill="#b9b5a8" opacity="0.90"/><ellipse cx="178" cy="125" rx="3.9" ry="3.0" fill="#8f8b7e" opacity="0.54"/><ellipse cx="326" cy="216" rx="7.0" ry="5.4" fill="#cfcbc0" opacity="0.77"/><ellipse cx="55" cy="156" rx="3.7" ry="2.9" fill="#b9b5a8" opacity="0.66"/><ellipse cx="70" cy="101" rx="4.6" ry="3.6" fill="#8f8b7e" opacity="0.62"/><ellipse cx="237" cy="113" rx="5.1" ry="4.0" fill="#cfcbc0" opacity="0.93"/><ellipse cx="296" cy="75" rx="6.7" ry="5.1" fill="#8f8b7e" opacity="0.78"/><ellipse cx="150" cy="82" rx="5.3" ry="4.1" fill="#8f8b7e" opacity="0.59"/><ellipse cx="119" cy="75" rx="5.0" ry="3.9" fill="#c4c0b4" opacity="0.91"/><ellipse cx="353" cy="33" rx="4.0" ry="3.1" fill="#dedad0" opacity="0.51"/><ellipse cx="25" cy="72" rx="6.1" ry="4.7" fill="#c4c0b4" opacity="0.57"/><ellipse cx="102" cy="231" rx="4.4" ry="3.4" fill="#a39f92" opacity="0.65"/><ellipse cx="300" cy="201" rx="3.4" ry="2.6" fill="#8f8b7e" opacity="0.88"/><ellipse cx="310" cy="118" rx="4.5" ry="3.5" fill="#cfcbc0" opacity="0.67"/><ellipse cx="265" cy="233" rx="5.2" ry="4.0" fill="#c4c0b4" opacity="0.87"/><ellipse cx="82" cy="162" rx="4.8" ry="3.7" fill="#a39f92" opacity="0.54"/><ellipse cx="42" cy="143" rx="5.8" ry="4.5" fill="#a39f92" opacity="0.87"/><ellipse cx="14" cy="90" rx="5.4" ry="4.2" fill="#c4c0b4" opacity="0.64"/><ellipse cx="293" cy="171" rx="3.5" ry="2.7" fill="#a39f92" opacity="0.80"/><ellipse cx="138" cy="215" rx="4.8" ry="3.7" fill="#8f8b7e" opacity="0.91"/><ellipse cx="323" cy="89" rx="4.6" ry="3.5" fill="#c4c0b4" opacity="0.90"/><ellipse cx="107" cy="101" rx="4.4" ry="3.4" fill="#dedad0" opacity="0.76"/><ellipse cx="79" cy="44" rx="6.5" ry="5.0" fill="#b9b5a8" opacity="0.60"/><ellipse cx="33" cy="58" rx="3.0" ry="2.3" fill="#dedad0" opacity="0.53"/><ellipse cx="223" cy="190" rx="3.2" ry="2.5" fill="#c4c0b4" opacity="0.55"/><ellipse cx="48" cy="196" rx="5.9" ry="4.6" fill="#dedad0" opacity="0.84"/><ellipse cx="213" cy="186" rx="4.3" ry="3.3" fill="#a39f92" opacity="0.80"/><ellipse cx="203" cy="138" rx="5.9" ry="4.5" fill="#b9b5a8" opacity="0.68"/><ellipse cx="287" cy="193" rx="4.7" ry="3.6" fill="#cfcbc0" opacity="0.61"/><ellipse cx="73" cy="158" rx="4.2" ry="3.3" fill="#dedad0" opacity="0.69"/><ellipse cx="124" cy="229" rx="4.2" ry="3.2" fill="#b9b5a8" opacity="0.64"/><ellipse cx="304" cy="29" rx="6.3" ry="4.8" fill="#a39f92" opacity="0.55"/><ellipse cx="82" cy="71" rx="5.9" ry="4.6" fill="#8f8b7e" opacity="0.73"/><ellipse cx="182" cy="213" rx="6.8" ry="5.2" fill="#a39f92" opacity="0.78"/><ellipse cx="199" cy="110" rx="5.7" ry="4.4" fill="#b9b5a8" opacity="0.72"/><ellipse cx="211" cy="83" rx="5.7" ry="4.4" fill="#cfcbc0" opacity="0.90"/><ellipse cx="106" cy="114" rx="4.6" ry="3.6" fill="#a39f92" opacity="0.57"/><ellipse cx="364" cy="195" rx="6.0" ry="4.6" fill="#8f8b7e" opacity="0.62"/><ellipse cx="11" cy="197" rx="6.4" ry="4.9" fill="#b9b5a8" opacity="0.66"/><ellipse cx="250" cy="136" rx="5.8" ry="4.5" fill="#b9b5a8" opacity="0.93"/><ellipse cx="239" cy="205" rx="6.2" ry="4.8" fill="#dedad0" opacity="0.59"/><ellipse cx="276" cy="189" rx="3.0" ry="2.3" fill="#dedad0" opacity="0.74"/><ellipse cx="71" cy="200" rx="4.2" ry="3.2" fill="#b9b5a8" opacity="0.75"/><ellipse cx="399" cy="165" rx="3.2" ry="2.4" fill="#cfcbc0" opacity="0.55"/><ellipse cx="164" cy="122" rx="6.4" ry="4.9" fill="#c4c0b4" opacity="0.70"/><ellipse cx="304" cy="142" rx="3.7" ry="2.8" fill="#dedad0" opacity="0.83"/><ellipse cx="292" cy="95" rx="3.3" ry="2.5" fill="#cfcbc0" opacity="0.78"/><ellipse cx="61" cy="157" rx="3.7" ry="2.8" fill="#b9b5a8" opacity="0.88"/><ellipse cx="241" cy="44" rx="3.5" ry="2.7" fill="#b9b5a8" opacity="0.70"/><ellipse cx="311" cy="97" rx="6.8" ry="5.3" fill="#cfcbc0" opacity="0.79"/><ellipse cx="309" cy="197" rx="4.3" ry="3.3" fill="#dedad0" opacity="0.78"/><ellipse cx="294" cy="154" rx="6.2" ry="4.8" fill="#cfcbc0" opacity="0.80"/><ellipse cx="247" cy="29" rx="4.3" ry="3.3" fill="#c4c0b4" opacity="0.70"/><ellipse cx="227" cy="68" rx="4.1" ry="3.2" fill="#b9b5a8" opacity="0.78"/><ellipse cx="72" cy="186" rx="5.2" ry="4.0" fill="#a39f92" opacity="0.78"/><ellipse cx="210" cy="146" rx="6.9" ry="5.3" fill="#c4c0b4" opacity="0.82"/><ellipse cx="375" cy="144" rx="5.7" ry="4.4" fill="#b9b5a8" opacity="0.56"/><ellipse cx="196" cy="113" rx="3.3" ry="2.5" fill="#a39f92" opacity="0.62"/><ellipse cx="103" cy="145" rx="3.1" ry="2.4" fill="#a39f92" opacity="0.58"/><ellipse cx="301" cy="213" rx="3.5" ry="2.7" fill="#b9b5a8" opacity="0.63"/><ellipse cx="40" cy="32" rx="7.1" ry="5.5" fill="#c4c0b4" opacity="0.56"/><ellipse cx="250" cy="159" rx="3.5" ry="2.7" fill="#dedad0" opacity="0.71"/><ellipse cx="66" cy="106" rx="3.6" ry="2.8" fill="#8f8b7e" opacity="0.56"/><ellipse cx="105" cy="221" rx="6.2" ry="4.8" fill="#c4c0b4" opacity="0.80"/><ellipse cx="193" cy="111" rx="5.8" ry="4.5" fill="#dedad0" opacity="0.84"/><ellipse cx="215" cy="116" rx="4.2" ry="3.3" fill="#b9b5a8" opacity="0.63"/><ellipse cx="250" cy="116" rx="4.2" ry="3.3" fill="#a39f92" opacity="0.90"/><ellipse cx="223" cy="163" rx="6.6" ry="5.1" fill="#c4c0b4" opacity="0.93"/><ellipse cx="270" cy="207" rx="6.3" ry="4.9" fill="#cfcbc0" opacity="0.79"/><ellipse cx="174" cy="51" rx="5.1" ry="3.9" fill="#cfcbc0" opacity="0.56"/><ellipse cx="220" cy="225" rx="3.9" ry="3.0" fill="#a39f92" opacity="0.51"/><ellipse cx="77" cy="118" rx="5.1" ry="4.0" fill="#cfcbc0" opacity="0.66"/><ellipse cx="238" cy="35" rx="6.7" ry="5.2" fill="#a39f92" opacity="0.65"/><ellipse cx="66" cy="188" rx="6.6" ry="5.1" fill="#cfcbc0" opacity="0.63"/><ellipse cx="89" cy="158" rx="6.6" ry="5.1" fill="#b9b5a8" opacity="0.79"/><ellipse cx="129" cy="197" rx="4.0" ry="3.1" fill="#dedad0" opacity="0.82"/><ellipse cx="63" cy="171" rx="4.8" ry="3.7" fill="#b9b5a8" opacity="0.58"/><ellipse cx="115" cy="176" rx="4.1" ry="3.2" fill="#a39f92" opacity="0.67"/></g>
<!-- extra blossoms --><g opacity="0.55"><ellipse cx="63" cy="168" rx="7.6" ry="5.4" fill="#d6d2c8" opacity="0.90"/><ellipse cx="162" cy="218" rx="7.9" ry="5.6" fill="#bdb9ad" opacity="0.55"/><ellipse cx="308" cy="119" rx="9.1" ry="6.5" fill="#d6d2c8" opacity="0.79"/><ellipse cx="183" cy="168" rx="10.2" ry="7.3" fill="#bdb9ad" opacity="0.60"/><ellipse cx="155" cy="142" rx="7.6" ry="5.4" fill="#d6d2c8" opacity="0.78"/><ellipse cx="160" cy="192" rx="6.0" ry="4.3" fill="#c9c5ba" opacity="0.90"/><ellipse cx="33" cy="144" rx="7.1" ry="5.1" fill="#a9a598" opacity="0.87"/><ellipse cx="294" cy="116" rx="7.4" ry="5.3" fill="#e4e0d6" opacity="0.66"/><ellipse cx="165" cy="89" rx="5.8" ry="4.1" fill="#e4e0d6" opacity="0.55"/><ellipse cx="32" cy="151" rx="8.1" ry="5.8" fill="#a9a598" opacity="0.74"/><ellipse cx="209" cy="73" rx="6.8" ry="4.9" fill="#a9a598" opacity="0.67"/><ellipse cx="201" cy="97" rx="5.3" ry="3.8" fill="#d6d2c8" opacity="0.82"/><ellipse cx="130" cy="166" rx="9.9" ry="7.1" fill="#d6d2c8" opacity="0.69"/><ellipse cx="293" cy="131" rx="6.3" ry="4.5" fill="#d6d2c8" opacity="0.61"/><ellipse cx="32" cy="189" rx="7.6" ry="5.4" fill="#a9a598" opacity="0.57"/><ellipse cx="93" cy="94" rx="5.9" ry="4.2" fill="#bdb9ad" opacity="0.85"/><ellipse cx="217" cy="67" rx="9.0" ry="6.4" fill="#bdb9ad" opacity="0.64"/><ellipse cx="317" cy="137" rx="5.1" ry="3.6" fill="#d6d2c8" opacity="0.86"/><ellipse cx="127" cy="68" rx="9.2" ry="6.6" fill="#e4e0d6" opacity="0.75"/><ellipse cx="282" cy="97" rx="6.4" ry="4.6" fill="#bdb9ad" opacity="0.68"/><ellipse cx="50" cy="172" rx="6.7" ry="4.8" fill="#d6d2c8" opacity="0.85"/><ellipse cx="197" cy="88" rx="10.3" ry="7.3" fill="#d6d2c8" opacity="0.60"/><ellipse cx="40" cy="57" rx="7.4" ry="5.3" fill="#d6d2c8" opacity="0.58"/><ellipse cx="48" cy="92" rx="10.2" ry="7.3" fill="#e4e0d6" opacity="0.72"/><ellipse cx="80" cy="71" rx="7.0" ry="5.0" fill="#c9c5ba" opacity="0.81"/><ellipse cx="203" cy="133" rx="5.2" ry="3.7" fill="#bdb9ad" opacity="0.69"/><ellipse cx="287" cy="114" rx="9.7" ry="6.9" fill="#d6d2c8" opacity="0.64"/><ellipse cx="233" cy="98" rx="7.1" ry="5.1" fill="#a9a598" opacity="0.80"/><ellipse cx="327" cy="191" rx="7.6" ry="5.5" fill="#c9c5ba" opacity="0.58"/><ellipse cx="202" cy="134" rx="10.3" ry="7.4" fill="#a9a598" opacity="0.65"/><ellipse cx="210" cy="180" rx="8.4" ry="6.0" fill="#a9a598" opacity="0.89"/><ellipse cx="44" cy="54" rx="9.5" ry="6.8" fill="#e4e0d6" opacity="0.73"/><ellipse cx="313" cy="166" rx="7.5" ry="5.4" fill="#c9c5ba" opacity="0.69"/><ellipse cx="138" cy="82" rx="7.3" ry="5.2" fill="#d6d2c8" opacity="0.65"/><ellipse cx="199" cy="115" rx="9.4" ry="6.7" fill="#e4e0d6" opacity="0.68"/><ellipse cx="37" cy="129" rx="8.9" ry="6.4" fill="#d6d2c8" opacity="0.82"/><ellipse cx="211" cy="180" rx="9.7" ry="6.9" fill="#a9a598" opacity="0.64"/><ellipse cx="303" cy="111" rx="9.5" ry="6.8" fill="#bdb9ad" opacity="0.61"/><ellipse cx="208" cy="109" rx="10.4" ry="7.4" fill="#d6d2c8" opacity="0.80"/><ellipse cx="76" cy="102" rx="8.7" ry="6.2" fill="#a9a598" opacity="0.58"/><ellipse cx="86" cy="167" rx="5.8" ry="4.1" fill="#e4e0d6" opacity="0.71"/><ellipse cx="150" cy="154" rx="5.9" ry="4.2" fill="#e4e0d6" opacity="0.77"/><ellipse cx="42" cy="220" rx="6.9" ry="4.9" fill="#a9a598" opacity="0.56"/><ellipse cx="234" cy="84" rx="7.9" ry="5.7" fill="#bdb9ad" opacity="0.89"/><ellipse cx="71" cy="109" rx="5.8" ry="4.2" fill="#c9c5ba" opacity="0.83"/><ellipse cx="273" cy="138" rx="6.0" ry="4.3" fill="#e4e0d6" opacity="0.86"/><ellipse cx="88" cy="146" rx="8.2" ry="5.8" fill="#e4e0d6" opacity="0.86"/><ellipse cx="16" cy="148" rx="9.9" ry="7.1" fill="#d6d2c8" opacity="0.60"/><ellipse cx="169" cy="137" rx="7.7" ry="5.5" fill="#a9a598" opacity="0.60"/><ellipse cx="59" cy="93" rx="5.0" ry="3.5" fill="#bdb9ad" opacity="0.78"/><ellipse cx="125" cy="105" rx="8.2" ry="5.8" fill="#a9a598" opacity="0.79"/><ellipse cx="219" cy="69" rx="10.1" ry="7.2" fill="#c9c5ba" opacity="0.64"/><ellipse cx="146" cy="100" rx="7.7" ry="5.5" fill="#a9a598" opacity="0.76"/><ellipse cx="213" cy="159" rx="7.0" ry="5.0" fill="#e4e0d6" opacity="0.61"/><ellipse cx="227" cy="80" rx="10.0" ry="7.1" fill="#c9c5ba" opacity="0.76"/><ellipse cx="46" cy="97" rx="7.5" ry="5.4" fill="#a9a598" opacity="0.55"/><ellipse cx="123" cy="154" rx="9.1" ry="6.5" fill="#d6d2c8" opacity="0.61"/><ellipse cx="322" cy="133" rx="6.2" ry="4.4" fill="#c9c5ba" opacity="0.74"/><ellipse cx="258" cy="177" rx="6.9" ry="4.9" fill="#bdb9ad" opacity="0.63"/><ellipse cx="202" cy="105" rx="9.8" ry="7.0" fill="#c9c5ba" opacity="0.60"/><ellipse cx="19" cy="118" rx="5.0" ry="3.6" fill="#d6d2c8" opacity="0.81"/><ellipse cx="78" cy="139" rx="10.5" ry="7.5" fill="#a9a598" opacity="0.59"/><ellipse cx="87" cy="118" rx="9.2" ry="6.6" fill="#d6d2c8" opacity="0.78"/><ellipse cx="91" cy="120" rx="7.6" ry="5.5" fill="#a9a598" opacity="0.56"/><ellipse cx="118" cy="121" rx="5.7" ry="4.1" fill="#d6d2c8" opacity="0.90"/><ellipse cx="131" cy="113" rx="8.6" ry="6.2" fill="#c9c5ba" opacity="0.65"/><ellipse cx="276" cy="125" rx="9.8" ry="7.0" fill="#c9c5ba" opacity="0.83"/><ellipse cx="165" cy="50" rx="9.5" ry="6.8" fill="#e4e0d6" opacity="0.67"/><ellipse cx="123" cy="144" rx="8.9" ry="6.4" fill="#bdb9ad" opacity="0.85"/><ellipse cx="250" cy="109" rx="9.3" ry="6.6" fill="#bdb9ad" opacity="0.87"/><ellipse cx="74" cy="197" rx="5.3" ry="3.8" fill="#a9a598" opacity="0.64"/><ellipse cx="43" cy="154" rx="7.8" ry="5.6" fill="#d6d2c8" opacity="0.72"/><ellipse cx="238" cy="80" rx="6.8" ry="4.8" fill="#c9c5ba" opacity="0.68"/><ellipse cx="72" cy="66" rx="8.8" ry="6.3" fill="#e4e0d6" opacity="0.57"/><ellipse cx="252" cy="151" rx="10.5" ry="7.5" fill="#d6d2c8" opacity="0.76"/><ellipse cx="130" cy="158" rx="6.9" ry="5.0" fill="#a9a598" opacity="0.69"/><ellipse cx="152" cy="160" rx="8.2" ry="5.8" fill="#e4e0d6" opacity="0.83"/><ellipse cx="16" cy="159" rx="6.1" ry="4.4" fill="#c9c5ba" opacity="0.87"/><ellipse cx="250" cy="104" rx="5.0" ry="3.6" fill="#a9a598" opacity="0.66"/><ellipse cx="115" cy="80" rx="5.9" ry="4.2" fill="#d6d2c8" opacity="0.55"/><ellipse cx="63" cy="159" rx="5.6" ry="4.0" fill="#bdb9ad" opacity="0.62"/><ellipse cx="234" cy="140" rx="6.3" ry="4.5" fill="#c9c5ba" opacity="0.75"/><ellipse cx="88" cy="120" rx="10.1" ry="7.2" fill="#bdb9ad" opacity="0.69"/><ellipse cx="317" cy="189" rx="9.9" ry="7.0" fill="#e4e0d6" opacity="0.56"/><ellipse cx="240" cy="138" rx="6.8" ry="4.9" fill="#e4e0d6" opacity="0.78"/><ellipse cx="135" cy="188" rx="6.5" ry="4.6" fill="#bdb9ad" opacity="0.72"/><ellipse cx="110" cy="112" rx="8.7" ry="6.2" fill="#d6d2c8" opacity="0.57"/><ellipse cx="249" cy="193" rx="5.5" ry="3.9" fill="#e4e0d6" opacity="0.63"/><ellipse cx="293" cy="174" rx="8.4" ry="6.0" fill="#c9c5ba" opacity="0.67"/><ellipse cx="70" cy="209" rx="6.0" ry="4.3" fill="#bdb9ad" opacity="0.63"/><ellipse cx="63" cy="218" rx="9.2" ry="6.6" fill="#e4e0d6" opacity="0.64"/><ellipse cx="123" cy="196" rx="8.8" ry="6.3" fill="#d6d2c8" opacity="0.79"/><ellipse cx="164" cy="101" rx="9.6" ry="6.9" fill="#d6d2c8" opacity="0.65"/><ellipse cx="250" cy="169" rx="5.3" ry="3.8" fill="#bdb9ad" opacity="0.64"/><ellipse cx="329" cy="101" rx="10.4" ry="7.4" fill="#d6d2c8" opacity="0.80"/><ellipse cx="84" cy="62" rx="6.1" ry="4.3" fill="#e4e0d6" opacity="0.89"/><ellipse cx="170" cy="170" rx="10.3" ry="7.4" fill="#e4e0d6" opacity="0.68"/><ellipse cx="307" cy="182" rx="5.2" ry="3.7" fill="#bdb9ad" opacity="0.81"/><ellipse cx="34" cy="101" rx="8.2" ry="5.8" fill="#e4e0d6" opacity="0.86"/><ellipse cx="187" cy="92" rx="7.2" ry="5.1" fill="#a9a598" opacity="0.71"/><ellipse cx="300" cy="203" rx="6.9" ry="4.9" fill="#c9c5ba" opacity="0.67"/><ellipse cx="310" cy="105" rx="9.5" ry="6.8" fill="#a9a598" opacity="0.83"/><ellipse cx="62" cy="219" rx="9.3" ry="6.7" fill="#d6d2c8" opacity="0.73"/><ellipse cx="24" cy="45" rx="8.7" ry="6.2" fill="#d6d2c8" opacity="0.85"/><ellipse cx="281" cy="155" rx="9.2" ry="6.5" fill="#bdb9ad" opacity="0.61"/><ellipse cx="244" cy="116" rx="9.0" ry="6.4" fill="#e4e0d6" opacity="0.83"/><ellipse cx="284" cy="178" rx="6.3" ry="4.5" fill="#a9a598" opacity="0.63"/><ellipse cx="273" cy="182" rx="10.3" ry="7.3" fill="#c9c5ba" opacity="0.89"/><ellipse cx="304" cy="125" rx="9.3" ry="6.6" fill="#d6d2c8" opacity="0.80"/><ellipse cx="150" cy="49" rx="7.6" ry="5.4" fill="#c9c5ba" opacity="0.72"/><ellipse cx="49" cy="189" rx="5.1" ry="3.6" fill="#a9a598" opacity="0.73"/></g>
<path d="M590 170L810 158V205H640Z" fill="#6f8a49"/>
<path d="M0 285H95L80 330H0Z" fill="#6d8c4c"/>
<!-- road -->
<path d="M0 330L60 330L810 195V500H0Z" fill="url(#p1road)"/>
<path d="M740 200H810V320H760Z" fill="#7b7b7b"/>
<path d="M0 330H52V402H0Z" fill="#9b9b96"/>
<path d="M0 400L95 392V408L0 416Z" fill="#c6c6c6"/>
<path d="M760 500L810 470V500Z" fill="#f4f4f4"/>
<!-- sign -->
<rect x="287" y="76" width="8" height="105" fill="#8f8f88"/>
<rect x="268" y="52" width="44" height="25" fill="#aeb4c0"/>
<rect x="274" y="59" width="32" height="9" fill="#5d6572"/>
<rect x="280" y="135" width="20" height="30" fill="#a2a29c"/>
<!-- person -->
<ellipse cx="447" cy="93" rx="10" ry="12" fill="#c99a7c"/>
<path d="M437 88Q447 74 458 88L456 92H438Z" fill="#8b7d6e"/>
<path d="M404 112L438 100L460 110L458 152L410 162Z" fill="#f96b33"/>
<path d="M404 140H432V166H404Z" fill="#c9d242"/>
<path d="M455 138L472 142V152L455 150Z" fill="#d9b59a"/>
<!-- car body dark -->
<path d="M52 332L96 296L150 262L250 228L330 183L430 166L560 168L680 188L742 232L756 288L742 338L640 352L432 398L250 445L170 442L88 402L55 382Z" fill="#22222a"/>
<path d="M560 170L680 190L742 234L754 288L740 336L650 348L610 330L625 270L612 235Z" fill="#2b2a38"/>
<!-- car-top stuff -->
<path d="M538 158L622 156L640 172L560 174Z" fill="#e6e6ec"/>
<path d="M612 154L668 156L676 178L620 174Z" fill="#5b90da"/>
<path d="M640 172L682 176L686 186L646 182Z" fill="#ececf0"/>
<ellipse cx="598" cy="201" rx="12" ry="9" fill="#d6d6d6"/>
<!-- windshield & window -->
<path d="M233 244L307 188L438 179L412 240L252 254Z" fill="url(#p1ws)"/><path d="M300 200L420 188L408 214L280 228Z" fill="#b4c2cb" opacity="0.45"/>
<path d="M438 228L475 186L559 182L568 222Z" fill="#75828e"/>
<path d="M475 187L559 183L562 198L464 202Z" fill="#93a0ac"/>
<!-- hood stripe red -->
<path d="M88 286L128 256L215 240L232 246L150 270L104 296Z" fill="#cf3c3c"/>
<path d="M112 264L196 244L215 242L132 264Z" fill="#e26662"/>
<!-- door -->
<path d="M426 262L610 236L622 270L602 330L440 366L427 300Z" fill="url(#p1door)"/>
<ellipse cx="452" cy="236" rx="24" ry="10" fill="#d8303a"/>
<rect x="560" y="258" width="34" height="8" rx="3" fill="#e9c7c9"/>
<!-- fender -->
<path d="M205 300L255 264L415 252L428 352L414 352A64 64 0 0 0 284 332L240 346Z" fill="#db303b"/>
<path d="M255 268L412 256L414 276L262 292Z" fill="#ee5b62"/>
<path d="M418 254L426 254L436 372L426 374Z" fill="#191920"/>
<!-- wreck -->
<path d="M50 332L96 300L232 300L252 332L246 432L170 442L90 402L55 382Z" fill="#1b1b20"/>
<path d="M200 302L262 296L268 340L225 350Z" fill="#c42f38"/>
<path d="M100 330L190 318L200 345L120 360Z" fill="#34343c"/>
<path d="M205 415L232 405L245 425L215 436Z" fill="#e4e4e8"/>
<path d="M182 428L202 424L206 438L186 440Z" fill="#c8c8cc"/>
<path d="M62 350L90 340L96 392L68 380Z" fill="#3a3a40"/>
<!-- wheels -->
<ellipse cx="347" cy="370" rx="70" ry="68" fill="#232326"/>
<ellipse cx="352" cy="367" rx="51" ry="51" fill="url(#p1rim)"/>
<g stroke="#5c5c5f" stroke-width="4.5" fill="none">
<path d="M352 318V416M303 367H401M317 332L387 402M387 332L317 402M333 321L371 413M371 321L333 413M306 348L398 386M398 348L306 386"/>
</g>
<ellipse cx="352" cy="367" rx="13" ry="13" fill="#9c9c9c"/>
<ellipse cx="352" cy="367" rx="51" ry="51" fill="none" stroke="#d0d0d0" stroke-width="5"/>
<ellipse cx="706" cy="290" rx="41" ry="60" fill="#202024"/>
<ellipse cx="709" cy="289" rx="28" ry="45" fill="url(#p1rim)"/>
<g stroke="#5c5c5f" stroke-width="4" fill="none"><path d="M709 246V332M683 289H735M690 258L728 320M728 258L690 320"/></g>
<ellipse cx="709" cy="289" rx="7" ry="10" fill="#8e8e8e"/>
<!-- sill shadow -->
<path d="M432 398L640 352L650 360L436 410Z" fill="#151518"/>
<path d="M250 445L432 400L436 412L260 456Z" fill="#4c4c4e" opacity="0.6"/>
</g>
</g>
</g>
</svg>
<svg style="left:504px;top:371px" width="168" height="109" viewBox="0 0 168 109">
<defs>
<clipPath id="p2c"><rect x="0" y="0" width="168" height="109"/></clipPath>
<filter id="p2b" x="-5%" y="-5%" width="110%" height="110%"><feGaussianBlur stdDeviation="0.55"/></filter>
<linearGradient id="p2sky" x1="0" y1="0" x2="0.3" y2="1"><stop offset="0" stop-color="#c3d8f1"/><stop offset="0.6" stop-color="#dfe9f5"/><stop offset="1" stop-color="#eef2f8"/></linearGradient>
<linearGradient id="p2lot" x1="0" y1="0" x2="0" y2="1"><stop offset="0" stop-color="#6a6864"/><stop offset="0.35" stop-color="#55534f"/><stop offset="1" stop-color="#38383a"/></linearGradient>
<linearGradient id="p2body" x1="0" y1="0" x2="0" y2="1"><stop offset="0" stop-color="#85878a"/><stop offset="0.45" stop-color="#6e7073"/><stop offset="1" stop-color="#515355"/></linearGradient>
<linearGradient id="p2hood" x1="0" y1="0" x2="1" y2="1"><stop offset="0" stop-color="#55585e"/><stop offset="0.5" stop-color="#2f3136"/><stop offset="1" stop-color="#3c3e44"/></linearGradient>
<radialGradient id="p2rim" cx="0.5" cy="0.5" r="0.5"><stop offset="0" stop-color="#77777a"/><stop offset="0.3" stop-color="#c2c2c6"/><stop offset="0.9" stop-color="#a6a6aa"/><stop offset="1" stop-color="#6c6c70"/></radialGradient>
</defs>
<g clip-path="url(#p2c)">
<g filter="url(#p2b)">
<g transform="scale(0.2134) translate(-10 -10)">
<rect x="0" y="0" width="810" height="540" fill="url(#p2sky)"/>
<ellipse cx="420" cy="30" rx="160" ry="12" fill="#f4f7fb" opacity="0.8"/>
<ellipse cx="700" cy="70" rx="120" ry="14" fill="#f6f8fc" opacity="0.8"/>
<ellipse cx="150" cy="55" rx="120" ry="10" fill="#eef3fa" opacity="0.7"/>
<!-- buildings -->
<path d="M0 110L135 78L165 82V215H0Z" fill="#dbd9d2"/>
<path d="M0 128L140 100V120L0 148Z" fill="#c2c0b8"/>
<path d="M22 150H118V210H22Z" fill="#9a978e"/>
<path d="M40 150H52V210H40ZM78 150H90V210H78Z" fill="#d8d6ce"/>
<path d="M135 78L165 82V215H140Z" fill="#efeee9"/>
<path d="M165 100L470 96L600 104L775 110V215H165Z" fill="#ecebe6"/>
<path d="M165 96L470 92L600 100L775 106V114L600 108L470 100L165 104Z" fill="#c9c8c2"/>
<path d="M470 92L590 76V104L470 100Z" fill="#b9bcc0"/>
<rect x="103" y="50" width="3" height="32" fill="#888"/>
<rect x="250" y="80" width="12" height="14" fill="#777"/>
<rect x="475" y="86" width="22" height="10" fill="#666"/>
<g fill="#5f666d">
<rect x="282" y="120" width="68" height="32"/><rect x="380" y="122" width="60" height="40"/><rect x="460" y="125" width="50" height="38"/>
<rect x="545" y="128" width="36" height="30"/><rect x="612" y="130" width="38" height="32"/><rect x="660" y="135" width="34" height="32"/>
<rect x="703" y="135" width="32" height="32"/><rect x="742" y="135" width="28" height="32"/>
</g>
<g stroke="#e8e8e4" stroke-width="3"><path d="M410 122V162M485 125V163M631 130V162M677 135V167M719 135V167M282 134H350"/></g>
<rect x="775" y="100" width="35" height="110" fill="#6a665c"/>
<rect x="598" y="8" width="8" height="150" fill="#8a8172"/>
<rect x="128" y="170" width="8" height="38" fill="#d8b830"/>
<!-- lot -->
<path d="M0 205H810V540H0Z" fill="url(#p2lot)"/>
<path d="M0 205H200V240H0Z" fill="#66666a" opacity="0.7"/>
<!-- blue car -->
<path d="M38 196L48 180L70 174L105 176L120 188L122 212L40 216Z" fill="#2857a6"/>
<path d="M52 182L72 177L100 179L108 190L54 192Z" fill="#223a62"/>
<ellipse cx="52" cy="214" rx="8" ry="6" fill="#16161a"/><ellipse cx="108" cy="212" rx="8" ry="6" fill="#16161a"/>
<!-- white car right -->
<path d="M740 200L770 182L810 178V245L760 240Z" fill="#e9e9ee"/>
<path d="M748 205L772 200L776 222L752 224Z" fill="#1c1c22"/>
<path d="M770 235H810V262H775Z" fill="#2a2a2e"/>
<!-- yellow lines -->
<path d="M480 482L800 350L806 362L492 496Z" fill="#e4b622"/>
<path d="M8 285L90 280V289L8 294ZM8 328L150 316V325L8 337ZM8 402L62 394V404L8 412Z" fill="#b8962c" opacity="0.6"/>
<path d="M690 300L790 290V298L690 308Z" fill="#c9a42a" opacity="0.6"/>
<!-- car body -->
<path d="M470 168L560 158L640 158L706 180L758 228L774 288L752 350L700 380L534 446L500 440L420 400L400 330L430 290L470 250Z" fill="url(#p2body)"/>
<path d="M468 170L585 164L525 262L486 246Z" fill="#5f6668"/>
<path d="M500 180L560 176L545 200L498 205Z" fill="#aab2b4" opacity="0.7"/><path d="M490 215L540 205L525 245L495 240Z" fill="#3d4244" opacity="0.8"/>
<path d="M560 160L600 164L536 268L520 262Z" fill="#a8aaac"/>
<path d="M578 184L642 176L656 236L566 254Z" fill="#7f888b"/>
<path d="M590 190L640 182L648 215L585 230Z" fill="#a4adaf" opacity="0.75"/>
<path d="M652 180L706 188L734 232L668 238Z" fill="#98a1a4"/>
<path d="M644 176L654 178L668 240L658 242Z" fill="#4e5052"/>
<path d="M470 166L560 157L640 157L706 179L700 184L640 166L560 166L472 174Z" fill="#9b9da0"/>
<path d="M655 242L668 380M534 300L540 440" stroke="#4a4c4e" stroke-width="3" fill="none"/>
<path d="M566 246L618 238L624 258L580 266L566 262Z" fill="#3f4143"/>
<rect x="646" y="262" width="18" height="7" fill="#3a3c3e"/>
<path d="M420 398L534 446L700 380L752 350L748 362L702 392L536 460L424 412Z" fill="#2c2c2e"/>
<path d="M400 320L470 296L530 300L536 440L500 440A55 78 0 0 0 418 380Z" fill="#6b6d70"/>
<path d="M730 240L762 236L774 288L752 350L736 340Z" fill="#66686b"/>
<!-- rear wheel -->
<ellipse cx="747" cy="326" rx="27" ry="52" fill="#232325"/>
<ellipse cx="750" cy="325" rx="17" ry="38" fill="url(#p2rim)"/>
<g stroke="#505054" stroke-width="5"><path d="M750 290V360M735 325H765M740 300L760 350M760 300L740 350"/></g>
<!-- engine wreck -->
<path d="M178 215L430 205L470 250L430 292L420 400L330 420L150 390L118 300L130 255L180 250Z" fill="#18181a"/>
<ellipse cx="311" cy="352" rx="14" ry="10" fill="#0e0e10" opacity="0.88"/><ellipse cx="355" cy="261" rx="7" ry="4" fill="#5a5a60" opacity="0.55"/><ellipse cx="266" cy="261" rx="12" ry="8" fill="#101012" opacity="0.51"/><ellipse cx="193" cy="267" rx="16" ry="10" fill="#48484c" opacity="0.57"/><ellipse cx="361" cy="241" rx="12" ry="8" fill="#5a5a60" opacity="0.56"/><ellipse cx="412" cy="216" rx="14" ry="9" fill="#5a5a60" opacity="0.89"/><ellipse cx="214" cy="393" rx="12" ry="8" fill="#101012" opacity="0.58"/><ellipse cx="411" cy="251" rx="16" ry="11" fill="#48484c" opacity="0.63"/><ellipse cx="235" cy="246" rx="8" ry="5" fill="#3a3a3e" opacity="0.65"/><ellipse cx="367" cy="323" rx="12" ry="8" fill="#1a1a1c" opacity="0.53"/><ellipse cx="233" cy="272" rx="13" ry="9" fill="#5a5a60" opacity="0.72"/><ellipse cx="334" cy="226" rx="16" ry="11" fill="#0e0e10" opacity="0.93"/><ellipse cx="234" cy="290" rx="12" ry="8" fill="#48484c" opacity="0.66"/><ellipse cx="298" cy="217" rx="6" ry="4" fill="#5a5a60" opacity="0.78"/><ellipse cx="407" cy="237" rx="9" ry="6" fill="#a0a0a4" opacity="0.65"/><ellipse cx="233" cy="312" rx="14" ry="9" fill="#3a3a3e" opacity="0.77"/><ellipse cx="356" cy="283" rx="9" ry="6" fill="#48484c" opacity="0.93"/><ellipse cx="156" cy="278" rx="12" ry="8" fill="#5a5a60" opacity="0.65"/><ellipse cx="398" cy="316" rx="9" ry="6" fill="#1a1a1c" opacity="0.64"/><ellipse cx="362" cy="331" rx="14" ry="9" fill="#8a8a90" opacity="0.95"/><ellipse cx="177" cy="224" rx="16" ry="11" fill="#48484c" opacity="0.51"/><ellipse cx="345" cy="279" rx="9" ry="6" fill="#48484c" opacity="0.57"/><ellipse cx="414" cy="333" rx="14" ry="10" fill="#1a1a1c" opacity="0.88"/><ellipse cx="168" cy="350" rx="16" ry="11" fill="#48484c" opacity="0.55"/><ellipse cx="256" cy="243" rx="15" ry="10" fill="#8a8a90" opacity="0.56"/><ellipse cx="397" cy="330" rx="8" ry="5" fill="#a0a0a4" opacity="0.93"/><ellipse cx="330" cy="274" rx="9" ry="6" fill="#a0a0a4" opacity="0.68"/><ellipse cx="172" cy="285" rx="16" ry="11" fill="#5a5a60" opacity="0.78"/><ellipse cx="275" cy="278" rx="7" ry="5" fill="#8a8a90" opacity="0.73"/><ellipse cx="289" cy="308" rx="7" ry="4" fill="#1a1a1c" opacity="0.81"/><ellipse cx="323" cy="356" rx="10" ry="7" fill="#8a8a90" opacity="0.88"/><ellipse cx="207" cy="396" rx="14" ry="9" fill="#1a1a1c" opacity="0.79"/><ellipse cx="298" cy="217" rx="12" ry="8" fill="#8a8a90" opacity="0.65"/><ellipse cx="209" cy="268" rx="11" ry="8" fill="#1a1a1c" opacity="0.66"/><ellipse cx="317" cy="351" rx="15" ry="10" fill="#1a1a1c" opacity="0.92"/><ellipse cx="180" cy="375" rx="11" ry="7" fill="#1a1a1c" opacity="0.93"/><ellipse cx="280" cy="313" rx="8" ry="5" fill="#1a1a1c" opacity="0.92"/><ellipse cx="268" cy="343" rx="14" ry="9" fill="#48484c" opacity="0.58"/><ellipse cx="356" cy="322" rx="13" ry="9" fill="#48484c" opacity="0.64"/><ellipse cx="290" cy="375" rx="9" ry="6" fill="#0e0e10" opacity="0.59"/><ellipse cx="300" cy="330" rx="8" ry="5" fill="#5a5a60" opacity="0.78"/><ellipse cx="142" cy="302" rx="8" ry="6" fill="#0e0e10" opacity="0.90"/><ellipse cx="162" cy="394" rx="11" ry="7" fill="#0e0e10" opacity="0.69"/><ellipse cx="232" cy="338" rx="7" ry="5" fill="#101012" opacity="0.61"/><ellipse cx="392" cy="215" rx="10" ry="7" fill="#8a8a90" opacity="0.89"/><ellipse cx="381" cy="342" rx="12" ry="8" fill="#0e0e10" opacity="0.75"/><ellipse cx="217" cy="270" rx="11" ry="8" fill="#8a8a90" opacity="0.93"/><ellipse cx="367" cy="293" rx="15" ry="10" fill="#1a1a1c" opacity="0.71"/><ellipse cx="175" cy="286" rx="11" ry="7" fill="#101012" opacity="0.94"/><ellipse cx="306" cy="280" rx="15" ry="10" fill="#0e0e10" opacity="0.67"/><ellipse cx="225" cy="385" rx="12" ry="8" fill="#1a1a1c" opacity="0.78"/><ellipse cx="388" cy="285" rx="11" ry="7" fill="#101012" opacity="0.72"/><ellipse cx="269" cy="346" rx="10" ry="7" fill="#5a5a60" opacity="0.77"/><ellipse cx="205" cy="396" rx="11" ry="7" fill="#48484c" opacity="0.51"/><ellipse cx="404" cy="272" rx="16" ry="11" fill="#5a5a60" opacity="0.71"/><ellipse cx="165" cy="330" rx="11" ry="7" fill="#8a8a90" opacity="0.52"/><ellipse cx="170" cy="288" rx="11" ry="7" fill="#8a8a90" opacity="0.61"/><ellipse cx="268" cy="222" rx="11" ry="7" fill="#5a5a60" opacity="0.82"/><ellipse cx="213" cy="306" rx="16" ry="11" fill="#3a3a3e" opacity="0.51"/><ellipse cx="167" cy="267" rx="13" ry="9" fill="#8a8a90" opacity="0.83"/>
<path d="M112 262L170 254L180 285L135 298Z" fill="#1c1c1e"/>
<path d="M430 246L468 242L474 268L436 274Z" fill="#e8731f"/>
<path d="M436 262L470 258L474 268L436 274Z" fill="#a8a8a8"/>
<path d="M330 330L420 318L424 345L336 356Z" fill="#77777c" opacity="0.8"/>
<path d="M230 300L300 290L305 312L236 322Z" fill="#5d5d63" opacity="0.8"/>
<!-- hood -->
<path d="M165 182L190 150L240 142L330 150L400 168L470 176L440 196L380 216L300 228L215 222L172 210Z" fill="url(#p2hood)"/>
<path d="M190 152L240 144L330 152L300 170L205 178Z" fill="#70747b" opacity="0.7"/>
<ellipse cx="232" cy="200" rx="10" ry="7" fill="#c9ccd2" opacity="0.8"/>
<!-- bumper -->
<path d="M66 378L120 368L300 398L410 400L428 440L416 490L380 505L250 470L100 440L72 420Z" fill="#5a5956"/>
<path d="M80 392L300 420L400 424L404 440L300 440L84 408Z" fill="#77777b" opacity="0.8"/>
<path d="M100 440L250 470L380 505L330 505L110 462Z" fill="#1f1f21"/>
<path d="M72 420L100 440L96 470L80 452Z" fill="#2a2a2c"/>
<!-- front wheel -->
<ellipse cx="462" cy="440" rx="56" ry="80" fill="#252527"/>
<ellipse cx="468" cy="442" rx="40" ry="62" fill="url(#p2rim)"/>
<g stroke="#4e4e52" stroke-width="8" fill="none"><path d="M468 384V500M430 442H506M440 398L496 486M496 398L440 486M432 418L504 466M504 418L432 466"/></g>
<ellipse cx="468" cy="442" rx="9" ry="13" fill="#858589"/>
<ellipse cx="468" cy="442" rx="40" ry="62" fill="none" stroke="#cfcfd3" stroke-width="4"/>
</g>
</g>
</g>
</svg>
<div class="a" style="left:3px;top:579px;width:792px;height:1px;background:#b9b9b9"></div>
<div class="a" style="left:3px;top:580px;width:792px;height:2px;background:#f4f4f4"></div>
<div class="a" style="left:3px;top:582px;width:792px;height:1px;background:#a0a0a0"></div>
<div class="a" style="left:3px;top:583px;width:792px;height:15px;background:#f0f0f0"></div>
<div class="t ui" style="left:8px;top:584px;line-height:15px;height:15px;font-size:12px">Total number of result records = 2</div>
<svg style="left:782px;top:586px" width="12" height="12" viewBox="0 0 12 12"><path d="M1 11.5L11.8 0.7M5 11.5L11.8 4.7M9 11.5L11.8 8.7" stroke="#a6a6a6" stroke-width="1.5" fill="none"/></svg>
<svg style="left:0;top:0" width="806" height="610" viewBox="0 0 806 610">
<defs>
<filter id="ash" x="-20%" y="-20%" width="140%" height="150%"><feGaussianBlur stdDeviation="2"/></filter>
</defs>
<g fill="#000" opacity="0.5" filter="url(#ash)" transform="translate(1.5,3.2)">
<path d="M258.8 89.5L282.5 67.8L285 76.5L352 59.9L352 68.3L288.7 86.9L290.8 95.8Z"/>
<circle cx="368.6" cy="55.5" r="20.5"/>
<path d="M227.5 151.6L253.6 132.1L255.6 141.5L346 127.4L346 135.2L257.8 151.8L259 161.1Z"/>
<circle cx="362.4" cy="124.7" r="20.4"/>
</g>
<g fill="#fa4343">
<path d="M258.8 89.5L282.5 67.8L285 76.5L352 59.9L352 68.3L288.7 86.9L290.8 95.8Z"/>
<circle cx="368.6" cy="55.5" r="20.5"/>
<path d="M227.5 151.6L253.6 132.1L255.6 141.5L346 127.4L346 135.2L257.8 151.8L259 161.1Z"/>
<circle cx="362.4" cy="124.7" r="20.4"/>
</g>
<g fill="#fff" font-family="Liberation Sans, sans-serif" font-size="30.5" text-anchor="middle">
<text x="368.9" y="66">B</text>
<text x="362.5" y="135.2">A</text>
</g>
</svg>
</body>
</html>
